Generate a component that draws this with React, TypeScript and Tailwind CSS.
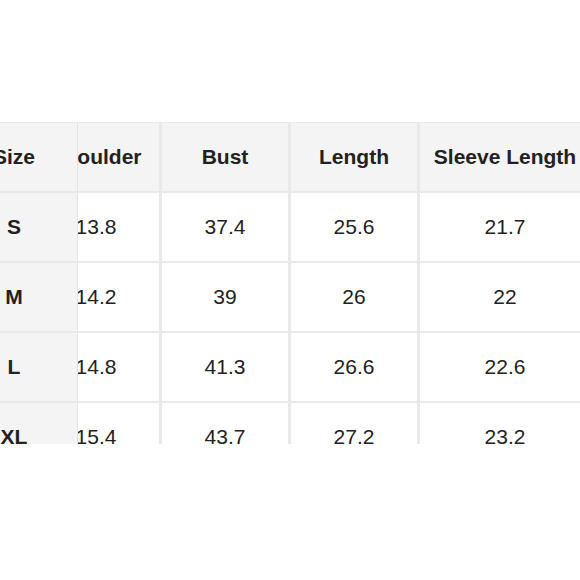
import React from 'react';

const rows = [
  { size: 'S', shoulder: '13.8', bust: '37.4', length: '25.6', sleeve: '21.7' },
  { size: 'M', shoulder: '14.2', bust: '39', length: '26', sleeve: '22' },
  { size: 'L', shoulder: '14.8', bust: '41.3', length: '26.6', sleeve: '22.6' },
  { size: 'XL', shoulder: '15.4', bust: '43.7', length: '27.2', sleeve: '23.2' },
];

function Row({ cells, header }: { cells: string[]; header?: boolean }) {
  const rowBg = header ? 'bg-[#f4f4f4]' : 'bg-white';
  const weight = header ? 'font-bold' : 'font-normal';
  return (
    <div className={`flex h-[70px] shrink-0 border-b-2 border-[#e9e9e9] ${rowBg}`}>
      {/* size column: sticky-looking, overlaps the shoulder column */}
      <div className="w-[78px] shrink-0 overflow-hidden border-r border-[#e4e4e4] bg-[#f4f4f4] flex items-center">
        <div className="w-[126px] shrink-0 ml-[-49px] text-center font-bold">{cells[0]}</div>
      </div>
      <div className="w-[81px] shrink-0 overflow-hidden flex items-center">
        <div className={`w-[128px] shrink-0 ml-[-46px] text-center ${weight}`}>{cells[1]}</div>
      </div>
      <div className={`w-[129px] shrink-0 border-l-[3px] border-[#e9e9e9] flex items-center justify-center ${weight}`}>
        {cells[2]}
      </div>
      <div className={`w-[129px] shrink-0 border-l-[3px] border-[#e9e9e9] flex items-center justify-center ${weight}`}>
        {cells[3]}
      </div>
      <div className={`w-[173px] shrink-0 border-l-[3px] border-[#e9e9e9] flex items-center justify-center whitespace-nowrap ${weight}`}>
        {cells[4]}
      </div>
    </div>
  );
}

export default function App() {
  return (
    <div
      className="w-[580px] h-[580px] bg-white overflow-hidden pt-[122px] text-[21px] text-[#222]"
      style={{ fontFamily: '"Liberation Sans", Arial, sans-serif' }}
    >
      <div className="h-[322px] overflow-hidden border-t border-[#e9e9e9] flex flex-col">
        <Row header cells={['Size', 'Shoulder', 'Bust', 'Length', 'Sleeve Length']} />
        {rows.map(r => (
          <Row key={r.size} cells={[r.size, r.shoulder, r.bust, r.length, r.sleeve]} />
        ))}
      </div>
    </div>
  );
}
